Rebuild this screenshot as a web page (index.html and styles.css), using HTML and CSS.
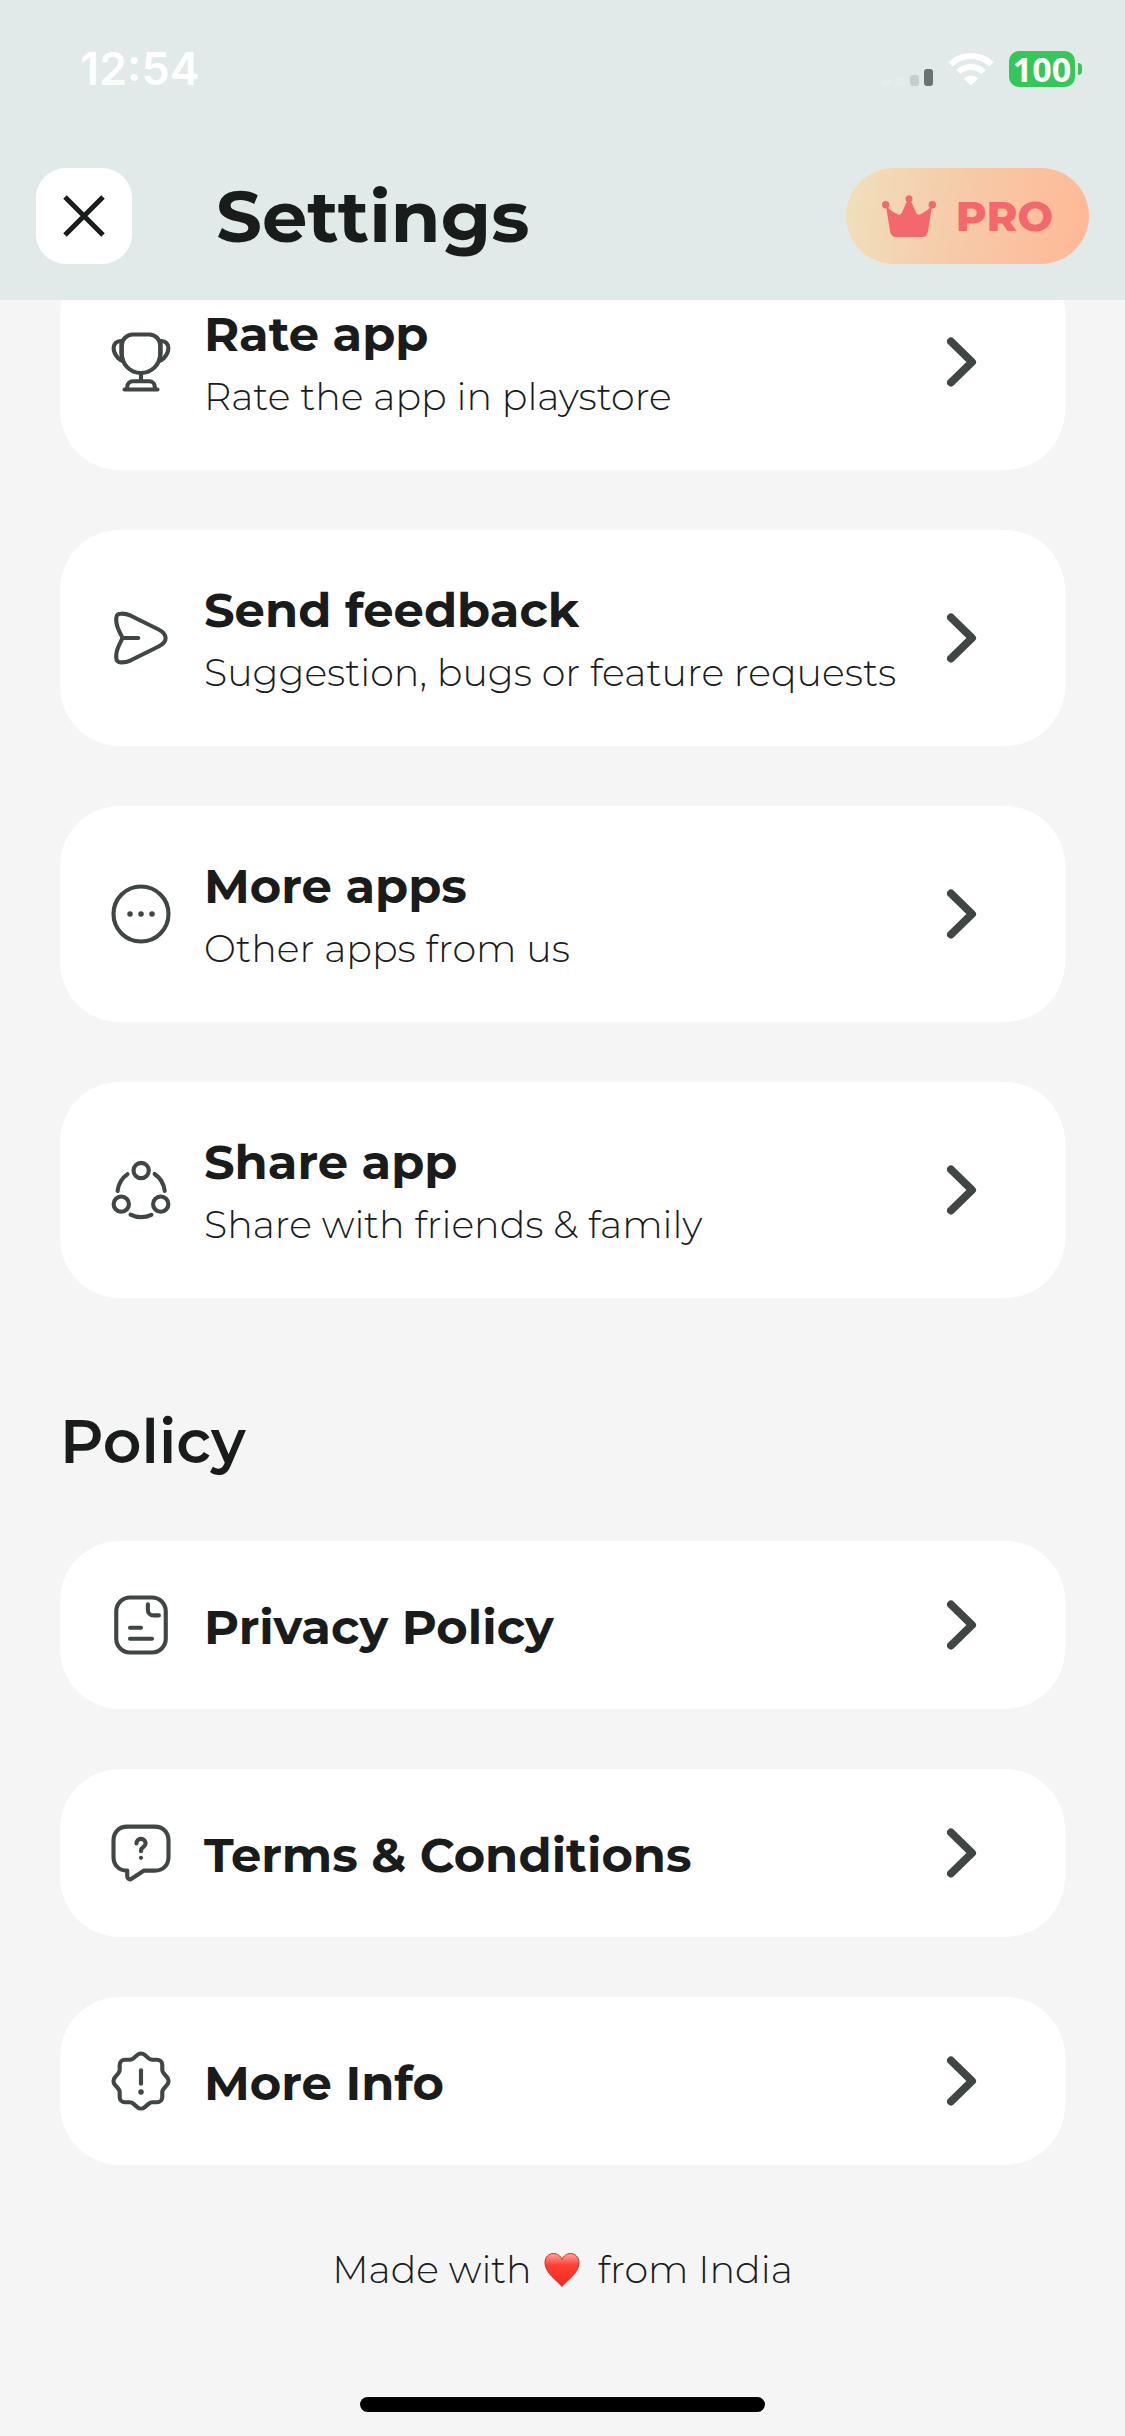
FILE: index.html
```html
<!DOCTYPE html>
<html lang="en">
<head>
    <meta charset="UTF-8">
    <meta name="viewport" content="width=device-width, initial-scale=1.0">
    <title>Settings</title>
    <link rel="stylesheet" href="styles.css">
</head>
<body>
    <!-- Shared chevron -->
    <svg class="symbols" width="0" height="0" aria-hidden="true">
        <symbol id="chevron" viewBox="0 0 30 50">
            <path d="M4 4.500L25 25L4 45.500" fill="none" stroke="currentColor" stroke-width="8" stroke-linecap="round" stroke-linejoin="round"/>
        </symbol>
    </svg>

    <header class="header">
        <div class="status-bar">
            <span class="time">12:54</span>
            <div class="status-icons">
                <svg class="signal" viewBox="0 0 52 34" aria-hidden="true">
                    <rect x="1" y="27" width="9" height="7" rx="2" fill="#e6eceb"/>
                    <rect x="15" y="25" width="9" height="9" rx="2" fill="#e6eceb"/>
                    <rect x="29" y="23" width="9" height="11" rx="3" fill="#c5cecc"/>
                    <rect x="43" y="17" width="9" height="17" rx="3" fill="#6a7371"/>
                </svg>
                <svg class="wifi" viewBox="0 0 46 34" aria-hidden="true">
                    <path d="M23 1C14 1 6 4.500 0.500 10.200L4.800 14.600C9.500 9.900 15.900 7 23 7S36.500 9.900 41.200 14.600L45.500 10.200C40 4.500 32 1 23 1Z"/>
                    <path d="M23 12C17 12 12 14.300 8.300 18L12.700 22.300C15.400 19.600 19 18 23 18S30.600 19.600 33.300 22.300L37.700 18C34 14.300 29 12 23 12Z"/>
                    <path d="M23 23.500C20.300 23.500 17.800 24.600 16 26.500L23 33.500L30 26.500C28.200 24.600 25.700 23.500 23 23.500Z"/>
                </svg>
                <div class="battery">
                    <span class="battery-level">100</span>
                    <span class="battery-tip"></span>
                </div>
            </div>
        </div>
        <div class="title-bar">
            <button class="close-btn" type="button" aria-label="Close">
                <svg viewBox="0 0 42 42" aria-hidden="true"><path d="M2 2L40 40M40 2L2 40"/></svg>
            </button>
            <h1>Settings</h1>
            <button class="pro-btn" type="button">
                <svg viewBox="0 0 54 42" aria-hidden="true">
                    <circle cx="3.700" cy="9.700" r="3.700"/>
                    <circle cx="27" cy="3.700" r="3.500"/>
                    <circle cx="50.300" cy="9.700" r="3.700"/>
                    <path d="M4 11L8 36C8.600 40 10.800 42 14 42H40C43.500 42 45.500 40 46 36L50 11C45 15.500 42 17.500 38.500 19.300C36.500 20.300 35 19.500 34 17.500L28.500 5H25.500L20 17.500C19 19.500 17.500 20.300 15.500 19.300C12 17.500 9 15.500 4 11Z"/>
                </svg>
                PRO
            </button>
        </div>
    </header>

    <main class="content">
        <div class="card-list">
            <a href="#" class="card">
                <svg class="icon" viewBox="0 0 24 24" aria-hidden="true">
                    <path d="M12 16.500v2.100M7 22h10v-1c0-1.100-.9-2-2-2H9c-1.100 0-2 .9-2 2v1ZM6 22h12"/>
                    <path d="M12 16c-3.870 0-7-3.130-7-7V6c0-2.210 1.790-4 4-4h6c2.210 0 4 1.790 4 4v3c0 3.870-3.130 7-7 7Z"/>
                    <path d="M5.470 11.650c-.75-.24-1.410-.68-1.930-1.200-.9-1-1.500-2.200-1.500-3.600 0-1.400 1.100-2.500 2.500-2.500h.65c-.2.460-.3.970-.3 1.500v3c0 1 .21 1.940.58 2.800Z"/>
                    <path d="M18.530 11.650c.75-.24 1.410-.68 1.930-1.200.9-1 1.500-2.200 1.500-3.600 0-1.400-1.100-2.500-2.500-2.500h-.65c.2.460.3.970.3 1.500v3c0 1-.21 1.940-.58 2.800Z"/>
                </svg>
                <div class="card-text">
                    <h3>Rate app</h3>
                    <p>Rate the app in playstore</p>
                </div>
                <svg class="chevron" aria-hidden="true"><use href="#chevron"/></svg>
            </a>
            <a href="#" class="card">
                <svg class="icon" viewBox="0 0 24 24" aria-hidden="true">
                    <path d="M5.300 12C4.300 10 3 7.900 3 5.700V4.800C3 3.700 3.700 3.150 4.700 3.150C6.200 3.050 7.200 3.400 8.300 3.900L18.400 8.900C21.800 10.700 21.800 13.300 18.400 15.100L8.300 20.100C7.200 20.600 6.200 20.950 4.700 20.850C3.700 20.850 3 20.300 3 19.200V18.300C3 16.100 4.300 14 5.300 12ZM5.300 12H11"/>
                </svg>
                <div class="card-text">
                    <h3>Send feedback</h3>
                    <p>Suggestion, bugs or feature requests</p>
                </div>
                <svg class="chevron" aria-hidden="true"><use href="#chevron"/></svg>
            </a>
            <a href="#" class="card">
                <svg class="icon" viewBox="0 0 24 24" aria-hidden="true">
                    <circle cx="12" cy="12" r="10"/>
                    <path class="dots" d="M8 12h.01M12 12h.01M16 12h.01"/>
                </svg>
                <div class="card-text">
                    <h3>More apps</h3>
                    <p>Other apps from us</p>
                </div>
                <svg class="chevron" aria-hidden="true"><use href="#chevron"/></svg>
            </a>
            <a href="#" class="card">
                <svg class="icon" viewBox="0 0 24 24" aria-hidden="true">
                    <path d="M16.960 6.170c2 1.390 3.380 3.600 3.660 6.150M3.490 12.370a8.600 8.600 0 0 1 3.600-6.150M8.190 20.940c1.160.59 2.480.92 3.870.92 1.340 0 2.600-.3 3.730-.85"/>
                    <circle cx="12.060" cy="4.920" r="2.780"/>
                    <circle cx="4.830" cy="17.140" r="2.780"/>
                    <circle cx="19.170" cy="17.140" r="2.780"/>
                </svg>
                <div class="card-text">
                    <h3>Share app</h3>
                    <p>Share with friends &amp; family</p>
                </div>
                <svg class="chevron" aria-hidden="true"><use href="#chevron"/></svg>
            </a>
        </div>

        <h2>Policy</h2>

        <div class="card-list">
            <a href="#" class="card card-small">
                <svg class="icon" viewBox="0 0 24 24" aria-hidden="true">
                    <rect x="3" y="2" width="18" height="20" rx="5"/>
                    <path d="M14.500 4.500v2c0 1.100.9 2 2 2h2M8 13h4M8 17h8"/>
                </svg>
                <div class="card-text">
                    <h3>Privacy Policy</h3>
                </div>
                <svg class="chevron" aria-hidden="true"><use href="#chevron"/></svg>
            </a>
            <a href="#" class="card card-small">
                <svg class="icon" viewBox="0 0 24 24" aria-hidden="true">
                    <path d="M17 18.430h-4l-4.450 2.960A1 1 0 0 1 7 20.560v-2.130c-3 0-5-2-5-5v-6c0-3 2-5 5-5h10c3 0 5 2 5 5v6c0 3-2 5-5 5Z"/>
                    <path d="M12 11.360v-.21c0-.68.42-1.040.84-1.330.41-.28.82-.64.82-1.300 0-.92-.74-1.660-1.660-1.660s-1.660.74-1.660 1.660M12 13.750h.01"/>
                </svg>
                <div class="card-text">
                    <h3>Terms &amp; Conditions</h3>
                </div>
                <svg class="chevron" aria-hidden="true"><use href="#chevron"/></svg>
            </a>
            <a href="#" class="card card-small">
                <svg class="icon" viewBox="0 0 24 24" aria-hidden="true">
                    <path d="M10.750 2.450c.69-.59 1.820-.59 2.520 0l1.580 1.360c.3.260.86.470 1.260.47h1.700c1.060 0 1.930.87 1.930 1.930v1.700c0 .39.21.960.47 1.260l1.360 1.580c.59.690.59 1.820 0 2.520l-1.360 1.580c-.26.300-.47.860-.47 1.260v1.700c0 1.060-.87 1.930-1.930 1.930h-1.700c-.39 0-.96.210-1.260.47l-1.580 1.360c-.69.590-1.820.590-2.520 0l-1.580-1.360c-.3-.26-.86-.47-1.260-.47H6.180c-1.060 0-1.930-.87-1.930-1.930v-1.710c0-.39-.21-.95-.46-1.250l-1.350-1.590c-.58-.69-.58-1.810 0-2.500l1.350-1.590c.25-.3.46-.86.46-1.250V6.200c0-1.060.87-1.930 1.930-1.930h1.730c.39 0 .96-.21 1.260-.47l1.580-1.350Z"/>
                    <path d="M12 8.130v4.830"/>
                    <path class="dots" d="M12 16h.01"/>
                </svg>
                <div class="card-text">
                    <h3>More Info</h3>
                </div>
                <svg class="chevron" aria-hidden="true"><use href="#chevron"/></svg>
            </a>
        </div>
    </main>

    <footer class="footer">
        <p class="made-with">
            <span>Made with</span>
            <svg class="heart" viewBox="0 0 36 36" role="img" aria-label="love">
                <defs>
                    <linearGradient id="heart-fill" x1="0" y1="0" x2="0" y2="1">
                        <stop offset="0" stop-color="#ffa79e"/>
                        <stop offset="0.350" stop-color="#ff4034"/>
                        <stop offset="1" stop-color="#f5281c"/>
                    </linearGradient>
                </defs>
                <path d="M18 34.500C14 29 1 21.500 1 10.500C1 5 4.800 1.500 9.500 1.500C13.500 1.500 16.500 4 18 7.500C19.500 4 22.500 1.500 26.500 1.500C31.200 1.500 35 5 35 10.500C35 21.500 22 29 18 34.500Z" fill="url(#heart-fill)" stroke="#d8281f" stroke-width="1"/>
            </svg>
            <span>from India</span>
        </p>
        <div class="home-indicator"></div>
    </footer>
</body>
</html>
```
FILE: styles.css
```css
* {
    box-sizing: border-box;
}

body {
    margin: 0;
    min-height: 100vh;
    display: flex;
    flex-direction: column;
    background-color: #f5f5f5;
    color: #191c1b;
    font-family: Montserrat, Inter, sans-serif;
}

h1, h2, h3, p {
    margin: 0;
}

button {
    border: none;
    padding: 0;
    font-family: inherit;
    cursor: pointer;
}

.symbols {
    position: absolute;
}

/* Header stays above the scrolled list */
.header {
    position: sticky;
    top: 0;
    z-index: 1;
    background-color: #e1eae8;
    padding-bottom: 36px;
}

.status-bar {
    height: 168px;
    padding: 42px 43px 0 80px;
    display: flex;
    justify-content: space-between;
    align-items: flex-start;
}

.time {
    color: #fff;
    font-family: Inter, sans-serif;
    font-size: 45px;
    font-weight: 600;
    line-height: 54px;
}

.status-icons {
    display: flex;
    align-items: center;
    gap: 15px;
    height: 54px;
}

.signal {
    width: 52px;
    height: 34px;
}

.wifi {
    width: 46px;
    height: 34px;
    fill: #fff;
}

.battery {
    display: flex;
    align-items: center;
    gap: 3px;
}

.battery-level {
    width: 66px;
    height: 36px;
    border-radius: 10px;
    background-color: #34c759;
    color: #fff;
    font-family: "Open Sans", sans-serif;
    font-size: 34px;
    font-weight: 700;
    line-height: 36px;
    text-align: center;
}

.battery-tip {
    width: 4px;
    height: 12px;
    border-radius: 0 4px 4px 0;
    background-color: #34c759;
}

.title-bar {
    display: flex;
    align-items: center;
    padding: 0 36px;
}

.close-btn {
    width: 96px;
    height: 96px;
    border-radius: 30px;
    background-color: #fff;
    display: flex;
    align-items: center;
    justify-content: center;
}

.close-btn svg {
    width: 42px;
    height: 42px;
    fill: none;
    stroke: #191c1b;
    stroke-width: 5;
}

.title-bar h1 {
    flex: 1;
    margin-left: 84px;
    font-size: 72px;
    font-weight: 700;
    line-height: 96px;
}

.pro-btn {
    height: 96px;
    padding: 0 36px;
    border-radius: 48px;
    background: linear-gradient(100deg, #f0e0bc, #f7c9a7 50%, #ffb896);
    color: #f2686c;
    display: flex;
    align-items: center;
    gap: 20px;
    font-size: 42px;
    font-weight: 800;
}

.pro-btn svg {
    width: 54px;
    height: 42px;
    fill: currentColor;
}

/* First card is partly scrolled under the header */
.content {
    margin-top: -46px;
    padding: 0 60px;
}

.card-list {
    display: flex;
    flex-direction: column;
    gap: 60px;
}

.card {
    min-height: 216px;
    padding: 0 88px 0 48px;
    border-radius: 60px;
    background-color: #fff;
    color: inherit;
    text-decoration: none;
    display: flex;
    align-items: center;
}

.card-small {
    min-height: 168px;
}

.icon {
    width: 66px;
    height: 66px;
    fill: none;
    stroke: #404644;
    stroke-width: 1.5;
    stroke-linecap: round;
    stroke-linejoin: round;
}

.icon .dots {
    stroke-width: 2;
}

.card-text {
    flex: 1;
    margin-left: 30px;
    padding-top: 4px;
}

.card-text h3 {
    font-size: 48px;
    font-weight: 700;
    line-height: 66px;
}

.card-text p {
    font-size: 38px;
    font-weight: 300;
    line-height: 60px;
}

.chevron {
    width: 30px;
    height: 50px;
    color: #404644;
}

.content h2 {
    padding: 108px 0 63px;
    font-size: 60px;
    font-weight: 600;
    line-height: 72px;
}

.footer {
    flex: 1;
    display: flex;
    flex-direction: column;
    align-items: center;
    justify-content: space-between;
    padding: 75px 0 24px;
}

.made-with {
    display: flex;
    align-items: center;
    gap: 12px;
    font-size: 38px;
    font-weight: 300;
    line-height: 60px;
}

.heart {
    width: 36px;
    height: 36px;
    margin-right: 6px;
}

.home-indicator {
    width: 36%;
    height: 15px;
    border-radius: 8px;
    background-color: #000;
}
```
